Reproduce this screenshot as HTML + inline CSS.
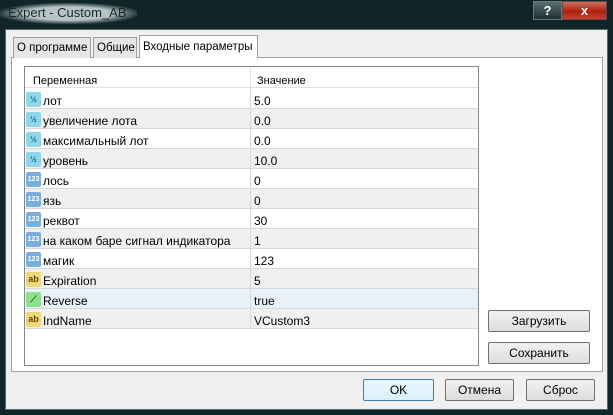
<!DOCTYPE html>
<html><head><meta charset="utf-8"><style>
*{box-sizing:border-box;margin:0;padding:0}
body{width:613px;height:415px;background:#0f2528;font-family:"Liberation Sans",sans-serif;font-size:12px;color:#000;position:relative;overflow:hidden}
.a{position:absolute}
.title{left:0px;top:3px;color:#1a2a2c;font-size:13px;line-height:18px;background:radial-gradient(ellipse at center,#b8c4c4 45%,rgba(150,170,170,0) 75%);padding:1px 10px 2px 8px}
.client{left:5px;top:29px;width:603px;height:381px;background:#f0f0f0;border:1px solid #5a6a6c}
.tab{top:37px;height:21px;border:1px solid #a0a0a0;border-bottom:none;background:#e6e6e6;padding:4px 0 0 3px;font-size:11.5px;white-space:nowrap;overflow:hidden}
.panel{left:11px;top:57px;width:592px;height:315px;background:#fff;border:1px solid #a0a0a0}
.list{left:24px;top:66px;width:455px;height:300px;background:#fff;border:1px solid #828790}
.row{position:absolute;left:0;width:453px;height:20px;border-bottom:1px solid #d8d8d8}
.row span{position:absolute;top:5px}
.c1{left:18px}.c2{left:229px}
.div{position:absolute;left:225px;top:0;width:1px;height:20px;background:#d8d8d8}
.ic{position:absolute;left:1px;top:3px;width:15px;height:15px;border-radius:2px;font-size:8px;line-height:15px;text-align:center;font-weight:bold}
.btn{height:22px;border:1px solid #707070;border-radius:2px;background:linear-gradient(#f2f2f2,#dcdcdc);text-align:center;line-height:20px;font-size:12px}
</style></head><body>
<div class="a title">Expert - Custom_AB</div>
<div class="a" style="left:533px;top:1px;width:29px;height:19px;border:1px solid #6a7a7c;background:linear-gradient(#5a6e70,#1c3032);color:#fff;font-weight:bold;text-align:center;line-height:17px;font-size:13px">?</div>
<div class="a" style="left:562px;top:1px;width:45px;height:19px;border:1px solid #6a4a4a;background:linear-gradient(#d07060,#b02010 55%,#c84030);color:#fff;font-weight:bold;text-align:center;line-height:17px;font-size:13px">x</div>
<div class="a client"></div>
<div class="a panel"></div>
<div class="a tab" style="left:13px;width:78px">О программе</div>
<div class="a tab" style="left:93px;width:44px">Общие</div>
<div class="a tab" style="left:139px;top:35px;height:23px;width:119px;background:#fff;z-index:2;padding-top:5px">Входные параметры</div>
<div class="a list">
<div class="row" style="top:0;height:21px;border-bottom:1px solid #e0e0e0"><span style="left:8px;top:8px;font-size:11px">Переменная</span><div class="div" style="height:21px;background:#e0e0e0"></div><span style="left:232px;top:8px;font-size:11px">Значение</span></div>
<div class="row" style="top:22px;background:#fff"><div class="ic" style="background:#8ed6ea;color:#1a6a9a">½</div><span class="c1">лот</span><div class="div"></div><span class="c2">5.0</span></div>
<div class="row" style="top:42px;background:#f0f0f0"><div class="ic" style="background:#8ed6ea;color:#1a6a9a">½</div><span class="c1">увеличение лота</span><div class="div"></div><span class="c2">0.0</span></div>
<div class="row" style="top:62px;background:#fff"><div class="ic" style="background:#8ed6ea;color:#1a6a9a">½</div><span class="c1">максимальный лот</span><div class="div"></div><span class="c2">0.0</span></div>
<div class="row" style="top:82px;background:#f0f0f0"><div class="ic" style="background:#8ed6ea;color:#1a6a9a">½</div><span class="c1">уровень</span><div class="div"></div><span class="c2">10.0</span></div>
<div class="row" style="top:102px;background:#fff"><div class="ic" style="background:#7aaee0;color:#fff;font-size:7px">123</div><span class="c1">лось</span><div class="div"></div><span class="c2">0</span></div>
<div class="row" style="top:122px;background:#f0f0f0"><div class="ic" style="background:#7aaee0;color:#fff;font-size:7px">123</div><span class="c1">язь</span><div class="div"></div><span class="c2">0</span></div>
<div class="row" style="top:142px;background:#fff"><div class="ic" style="background:#7aaee0;color:#fff;font-size:7px">123</div><span class="c1">реквот</span><div class="div"></div><span class="c2">30</span></div>
<div class="row" style="top:162px;background:#f0f0f0"><div class="ic" style="background:#7aaee0;color:#fff;font-size:7px">123</div><span class="c1">на каком баре сигнал индикатора</span><div class="div"></div><span class="c2">1</span></div>
<div class="row" style="top:182px;background:#fff"><div class="ic" style="background:#7aaee0;color:#fff;font-size:7px">123</div><span class="c1">магик</span><div class="div"></div><span class="c2">123</span></div>
<div class="row" style="top:202px;background:#f0f0f0"><div class="ic" style="background:#f0d878;color:#5a4a00;font-size:9px">ab</div><span class="c1">Expiration</span><div class="div"></div><span class="c2">5</span></div>
<div class="row" style="top:222px;background:#e8f0fa"><div class="ic" style="background:#8ee08e;color:#206020;font-size:9px">⟋</div><span class="c1">Reverse</span><div class="div"></div><span class="c2">true</span></div>
<div class="row" style="top:242px;background:#f0f0f0"><div class="ic" style="background:#f0d878;color:#5a4a00;font-size:9px">ab</div><span class="c1">IndName</span><div class="div"></div><span class="c2">VCustom3</span></div>
</div>
<div class="a btn" style="left:488px;top:310px;width:102px">Загрузить</div>
<div class="a btn" style="left:488px;top:342px;width:102px">Сохранить</div>
<div class="a btn" style="left:363px;top:379px;width:71px;border-color:#3c7fb1;background:linear-gradient(#eaf6fd,#d9f0fc)">OK</div>
<div class="a btn" style="left:445px;top:379px;width:69px">Отмена</div>
<div class="a btn" style="left:526px;top:379px;width:69px">Сброс</div>
</body></html>
